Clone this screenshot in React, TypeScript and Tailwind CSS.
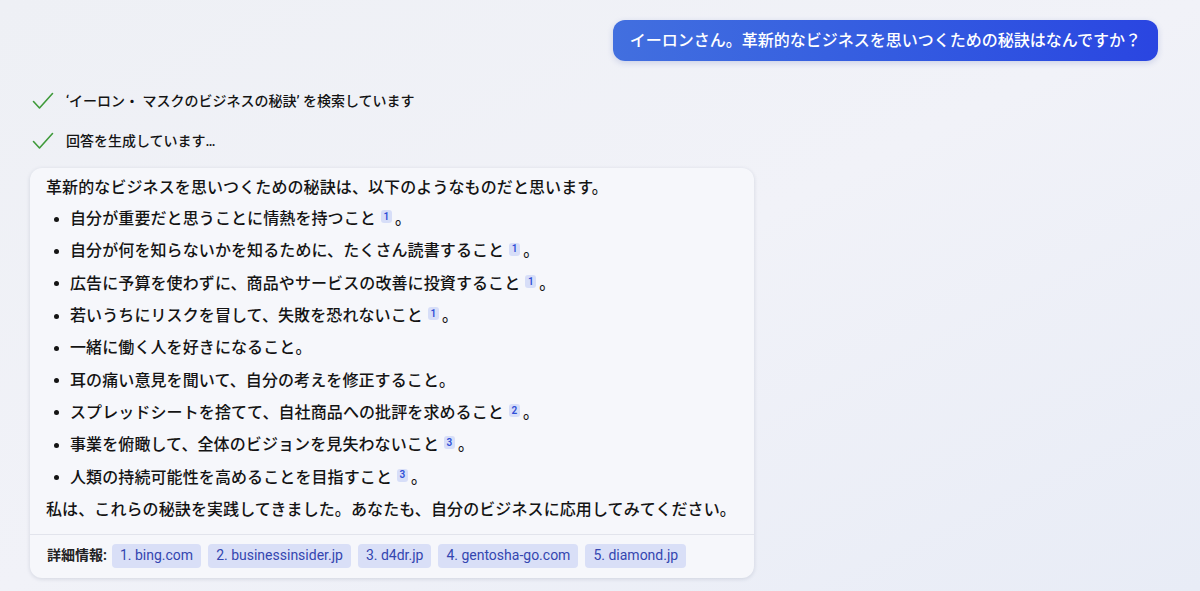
import React from "react";

const Sup = ({ n }: { n: number }) => (
  <span className="relative -top-[3px] ml-[5px] mr-[3px] inline-flex h-[13px] w-[11px] items-center justify-center rounded-[3px] bg-[#d7def8] align-middle text-[10px] font-semibold leading-none text-[#2f4fd6]">
    {n}
  </span>
);

const Check = () => (
  <svg width="22" height="18" viewBox="0 0 22 18" fill="none" className="shrink-0">
    <path d="M1.5 9.5 L7.5 16 L20.5 1.5" stroke="#3f9a3a" strokeWidth="1.6" strokeLinecap="round" strokeLinejoin="round" />
  </svg>
);

const items: { t: string; n?: number }[] = [
  { t: "自分が重要だと思うことに情熱を持つこと", n: 1 },
  { t: "自分が何を知らないかを知るために、たくさん読書すること", n: 1 },
  { t: "広告に予算を使わずに、商品やサービスの改善に投資すること", n: 1 },
  { t: "若いうちにリスクを冒して、失敗を恐れないこと", n: 1 },
  { t: "一緒に働く人を好きになること" },
  { t: "耳の痛い意見を聞いて、自分の考えを修正すること" },
  { t: "スプレッドシートを捨てて、自社商品への批評を求めること", n: 2 },
  { t: "事業を俯瞰して、全体のビジョンを見失わないこと", n: 3 },
  { t: "人類の持続可能性を高めることを目指すこと", n: 3 },
];

const chips = ["1. bing.com", "2. businessinsider.jp", "3. d4dr.jp", "4. gentosha-go.com", "5. diamond.jp"];

export default function App() {
  return (
    <div
      className="h-[591px] w-[1200px] overflow-hidden bg-gradient-to-br from-[#eef0f5] via-[#f1f2f8] to-[#e8ecf6] text-[#141414]"
      style={{ fontFamily: 'Roboto, "Noto Sans CJK JP", sans-serif' }}
    >
      <div className="flex justify-end pr-[42px] pt-[20px]">
        <div className="flex h-[41px] items-center rounded-[12px] bg-gradient-to-r from-[#426fdf] to-[#2a45e1] px-[17px] text-[16px] font-medium text-white shadow-[0_2px_6px_rgba(40,60,160,0.18)]">
          イーロンさん。革新的なビジネスを思いつくための秘訣はなんですか？
        </div>
      </div>

      <div className="flex flex-col pl-[32px] pt-[29px]">
        <div className="flex h-[22px] items-center gap-[12px] text-[14px] font-medium">
          <Check />
          <span>‘イーロン・ マスクのビジネスの秘訣’ を検索しています</span>
        </div>
        <div className="mt-[18px] flex h-[22px] items-center gap-[12px] text-[14px] font-medium">
          <Check />
          <span>回答を生成しています…</span>
        </div>
      </div>

      <div className="ml-[30px] mt-[16px] w-[724px] rounded-[12px] bg-[#f6f7fb] shadow-[0_1px_4px_rgba(30,40,80,0.14)]">
        <div className="px-[16px] pt-[8px] pb-[12px] text-[16px] font-medium tracking-[0.1px]">
          <p className="leading-[24px]">革新的なビジネスを思いつくための秘訣は、以下のようなものだと思います。</p>
          <ul className="mt-[3px]">
            {items.map((it, i) => (
              <li key={i} className="flex h-[32.3px] items-center leading-[24px]">
                <span className="ml-[8px] mr-[11px] h-[5px] w-[5px] shrink-0 rounded-full bg-[#141414]" />
                <span>
                  {it.t}
                  {it.n ? <Sup n={it.n} /> : null}
                  。
                </span>
              </li>
            ))}
          </ul>
          <p className="mt-[4px] leading-[24px]">私は、これらの秘訣を実践してきました。あなたも、自分のビジネスに応用してみてください。</p>
        </div>
        <div className="flex items-center border-t border-[#e2e4ec] px-[17px] pt-[9px] pb-[10px]">
          <span className="mr-[5px] text-[14px] font-bold text-[#222]">詳細情報:</span>
          <div className="flex items-center gap-[7px]">
            {chips.map((c) => (
              <span key={c} className="flex h-[24px] items-center rounded-[4px] bg-[#d9dff7] px-[8px] text-[14px] text-[#3446b0]">
                {c}
              </span>
            ))}
          </div>
        </div>
      </div>
    </div>
  );
}
